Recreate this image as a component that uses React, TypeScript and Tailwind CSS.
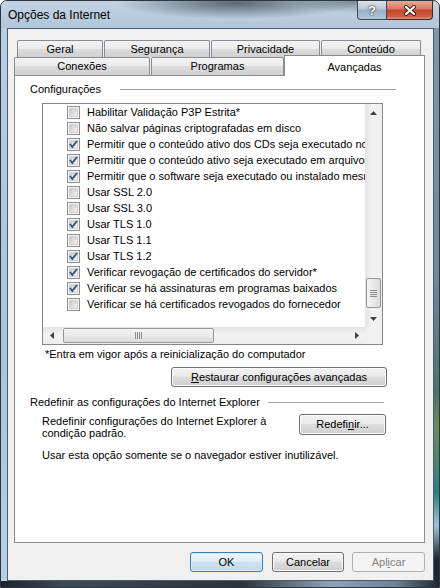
import type { ReactNode } from 'react'

const settings: [string, boolean][] = [
  ['Habilitar Validação P3P Estrita*', false],
  ['Não salvar páginas criptografadas em disco', false],
  ['Permitir que o conteúdo ativo dos CDs seja executado no computador*', true],
  ['Permitir que o conteúdo ativo seja executado em arquivos do Computador*', true],
  ['Permitir que o software seja executado ou instalado mesmo que a assinatura seja inválida', true],
  ['Usar SSL 2.0', false],
  ['Usar SSL 3.0', false],
  ['Usar TLS 1.0', true],
  ['Usar TLS 1.1', false],
  ['Usar TLS 1.2', true],
  ['Verificar revogação de certificados do servidor*', true],
  ['Verificar se há assinaturas em programas baixados', true],
  ['Verificar se há certificados revogados do fornecedor', false],
]

function CheckBox({ checked, idx }: { checked: boolean; idx: number }) {
  const gid = `cbg-${idx}`
  return (
    <svg width="13" height="13" viewBox="0 0 13 13" className="shrink-0">
      <defs>
        <linearGradient id={gid} x1="0" y1="0" x2="1" y2="1">
          <stop offset="0" stopColor="#c3c6cb" />
          <stop offset="1" stopColor="#f4f5f6" />
        </linearGradient>
      </defs>
      <rect x="0.5" y="0.5" width="12" height="12" fill="#f5f5f5" stroke="#8e8f8f" />
      <rect x="2.5" y="2.5" width="8" height="8" fill={`url(#${gid})`} stroke="#cdd0d4" />
      {checked && (
        <path d="M3.3 6.4 5.3 9 9.7 3.3" fill="none" stroke="#34508a" strokeWidth="1.7" strokeLinecap="round" />
      )}
    </svg>
  )
}

function Arrow({ dir }: { dir: 'up' | 'down' | 'left' | 'right' }) {
  const pts = {
    up: '0,4 3.5,0 7,4',
    down: '0,0 7,0 3.5,4',
    left: '4,0 4,7 0,3.5',
    right: '0,0 4,3.5 0,7',
  }[dir]
  const vertical = dir === 'up' || dir === 'down'
  return (
    <svg width={vertical ? 7 : 4} height={vertical ? 4 : 7} viewBox={vertical ? '0 0 7 4' : '0 0 4 7'}>
      <polygon points={pts} fill="#3f3f3f" />
    </svg>
  )
}

function WinButton({
  children,
  className = '',
  kind = 'normal',
}: {
  children: ReactNode
  className?: string
  kind?: 'normal' | 'default' | 'disabled'
}) {
  const look =
    kind === 'default'
      ? 'border-[#3c7fb1] bg-[linear-gradient(#eef6fc,#e2eef8_45%,#cfe2f1_50%,#c2d9eb)] shadow-[inset_0_0_0_1px_#d8ecfa]'
      : kind === 'disabled'
        ? 'border-[#adb2b5] bg-[#f4f4f4] text-[#838383]'
        : 'border-[#707070] bg-[linear-gradient(#f2f2f2,#ebebeb_45%,#dddddd_50%,#cfcfcf)] shadow-[inset_0_0_0_1px_#fbfbfb]'
  return (
    <div className={`flex items-center justify-center rounded-[3px] border ${look} ${className}`}>
      {children}
    </div>
  )
}

function Tab({ label, className = '' }: { label: string; className?: string }) {
  return (
    <div
      className={`flex items-center justify-center rounded-t-[2px] border-l border-t border-r border-[#898c95] bg-[linear-gradient(#f3f3f3,#ebebeb_50%,#dddddd_50%,#cfcfcf)] ${className}`}
    >
      {label}
    </div>
  )
}

export default function App() {
  return (
    <div className="w-[440px] h-[588px] flex flex-col rounded-t-[7px] border border-[#2c3540] bg-[#a9c0d6] font-['Liberation_Sans',Arial,sans-serif] text-[11px] text-black overflow-hidden">
      {/* Title bar */}
      <div className="h-[27px] flex items-start bg-[radial-gradient(ellipse_120px_16px_at_235px_2px,rgba(55,65,75,0.75),transparent),radial-gradient(ellipse_70px_12px_at_360px_0px,rgba(60,70,80,0.55),transparent),linear-gradient(#c4d3e2,#b2c6d9)]">
        <div className="pl-[7px] pt-[7px] text-[12px] leading-[14px]">Opções da Internet</div>
        <div className="ml-auto mr-[6px] flex">
          <div className="w-[30px] h-[19px] flex items-center justify-center rounded-bl-[4px] border border-t-0 border-[#3b4856] bg-[linear-gradient(#dbe3ea,#b9c7d4_45%,#9aafc3_50%,#aec5d8)]">
            <span className="text-white font-bold text-[13px] leading-[13px] [text-shadow:0_0_2px_#1c2630,0_0_1px_#1c2630]">?</span>
          </div>
          <div className="w-[46px] h-[19px] flex items-center justify-center rounded-br-[4px] border border-l-0 border-t-0 border-[#3e2a26] bg-[linear-gradient(#eaa898,#d77660_45%,#c4432b_50%,#cf5d40_85%,#e39478)]">
            <svg width="14" height="11" viewBox="0 0 14 11">
              <path d="M3 2 11 9M11 2 3 9" stroke="#3a1c16" strokeWidth="4" strokeLinecap="round" />
              <path d="M3 2 11 9M11 2 3 9" stroke="#ffffff" strokeWidth="2.2" strokeLinecap="round" />
            </svg>
          </div>
        </div>
      </div>

      {/* Middle: frame edges + client */}
      <div className="flex flex-1">
        <div className="w-[6px] bg-[linear-gradient(#b9cde0,#a9c3da_60%,#b7d0e4)]" />
        <div className="w-[427px] h-[553px] border border-[#4e5d6c] bg-[#f0f0f0] flex flex-col pt-[11px]">
          {/* Tabs row 1 */}
          <div className="ml-[9px] h-[17px] flex gap-[1px]">
            <Tab label="Geral" className="w-[86px]" />
            <Tab label="Segurança" className="w-[106px]" />
            <Tab label="Privacidade" className="w-[109px]" />
            <Tab label="Conteúdo" className="w-[100px]" />
          </div>
          {/* Tabs row 2 */}
          <div className="ml-[6px] h-[18px] flex items-start">
            <Tab label="Conexões" className="w-[136px] h-[18px]" />
            <Tab label="Programas" className="ml-[1px] w-[133px] h-[18px]" />
            <div className="relative z-10 -mt-[2px] w-[141px] h-[21px] flex items-start justify-center pt-[3px] border-l border-t border-r border-[#898c95] bg-white">
              Avançadas
            </div>
          </div>

          {/* Tab panel */}
          <div className="ml-[6px] w-[411px] h-[468px] border border-[#898c95] bg-white flex flex-col">
            <div className="mt-[6px] h-[14px] flex items-center pl-[15px] pr-[28px]">
              <span>Configurações</span>
              <div className="ml-[19px] flex-1 h-px bg-[#a3a3a3]" />
            </div>

            {/* List box */}
            <div className="mt-[7px] ml-[27px] w-[341px] h-[242px] border border-[#828790] flex flex-col">
              <div className="flex h-[223px]">
                <div className="w-[322px] overflow-hidden">
                  {settings.map(([label, checked], i) => (
                    <div key={label} className="h-[16px] flex items-center pl-[24px] whitespace-nowrap">
                      <CheckBox checked={checked} idx={i} />
                      <span className="ml-[7px]">{label}</span>
                    </div>
                  ))}
                </div>
                {/* Vertical scrollbar */}
                <div className="w-[17px] flex flex-col bg-[linear-gradient(to_right,#e3e3e3,#f3f3f3_45%,#eeeeee)]">
                  <div className="h-[17px] flex items-center justify-center">
                    <Arrow dir="up" />
                  </div>
                  <div className="flex-1" />
                  <div className="h-[30px] mx-[1px] rounded-[2px] border border-[#979797] bg-[linear-gradient(to_right,#f4f4f4,#e9e9e9_50%,#dcdcdc)] flex flex-col items-center justify-center gap-[1px]">
                    <div className="w-[7px] h-px bg-[#8c8c8c]" />
                    <div className="w-[7px] h-px bg-[#8c8c8c]" />
                    <div className="w-[7px] h-px bg-[#8c8c8c]" />
                    <div className="w-[7px] h-px bg-[#8c8c8c]" />
                  </div>
                  <div className="h-[2px]" />
                  <div className="h-[17px] flex items-center justify-center">
                    <Arrow dir="down" />
                  </div>
                </div>
              </div>
              <div className="flex h-[17px]">
                {/* Horizontal scrollbar */}
                <div className="w-[322px] flex bg-[linear-gradient(#e3e3e3,#f3f3f3_45%,#eeeeee)]">
                  <div className="w-[17px] flex items-center justify-center">
                    <Arrow dir="left" />
                  </div>
                  <div className="w-[3px]" />
                  <div className="w-[151px] my-[1px] rounded-[2px] border border-[#979797] bg-[linear-gradient(#f4f4f4,#e9e9e9_50%,#dcdcdc)] flex items-center justify-center gap-[1px]">
                    <div className="w-px h-[7px] bg-[#8c8c8c]" />
                    <div className="w-px h-[7px] bg-[#8c8c8c]" />
                    <div className="w-px h-[7px] bg-[#8c8c8c]" />
                    <div className="w-px h-[7px] bg-[#8c8c8c]" />
                  </div>
                  <div className="flex-1" />
                  <div className="w-[17px] flex items-center justify-center">
                    <Arrow dir="right" />
                  </div>
                </div>
                <div className="w-[17px] bg-[#f0f0f0]" />
              </div>
            </div>

            <div className="mt-[2px] h-[14px] flex items-center pl-[30px]">
              *Entra em vigor após a reinicialização do computador
            </div>
            <WinButton className="mt-[6px] ml-[156px] w-[216px] h-[20px]">
              <span>
                <span className="underline underline-offset-[1px]">R</span>estaurar configurações avançadas
              </span>
            </WinButton>

            <div className="mt-[8px] h-[14px] flex items-center pl-[15px] pr-[40px]">
              <span>Redefinir as configurações do Internet Explorer</span>
              <div className="ml-[8px] flex-1 h-px bg-[#a3a3a3]" />
            </div>
            <div className="mt-[5px] flex pl-[27px] pr-[38px]">
              <div className="mt-[1px] leading-[12px]">
                Redefinir configurações do Internet Explorer à
                <br />
                condição padrão.
              </div>
              <WinButton className="ml-auto w-[87px] h-[21px]">
                <span>
                  Redefi<span className="underline underline-offset-[1px]">n</span>ir...
                </span>
              </WinButton>
            </div>
            <div className="mt-[10px] h-[12px] leading-[12px] pl-[27px]">
              Usar esta opção somente se o navegador estiver inutilizável.
            </div>
          </div>

          {/* Dialog buttons */}
          <div className="mt-[9px] flex justify-end pr-[8px] gap-[8px]">
            <WinButton kind="default" className="w-[73px] h-[20px] mr-[1px]">
              OK
            </WinButton>
            <WinButton className="w-[72px] h-[20px]">Cancelar</WinButton>
            <WinButton kind="disabled" className="w-[73px] h-[20px]">
              <span>
                Apl<span className="underline underline-offset-[1px]">i</span>car
              </span>
            </WinButton>
          </div>
        </div>
        <div className="w-[5px] bg-[linear-gradient(#7f95aa,#6f889e_45%,#4d7366_66%,#6b8c5a_72%,#2c7f80_84%,#9cc5dd_90%,#1e2731_96%)]" />
      </div>

      {/* Bottom frame edge */}
      <div className="h-[6px] bg-[linear-gradient(to_right,#1c242d,#3d4a57_15%,#2a333c_55%,#8ea3b7_75%,#6d8296_90%,#1f2831)]" />
    </div>
  )
}
